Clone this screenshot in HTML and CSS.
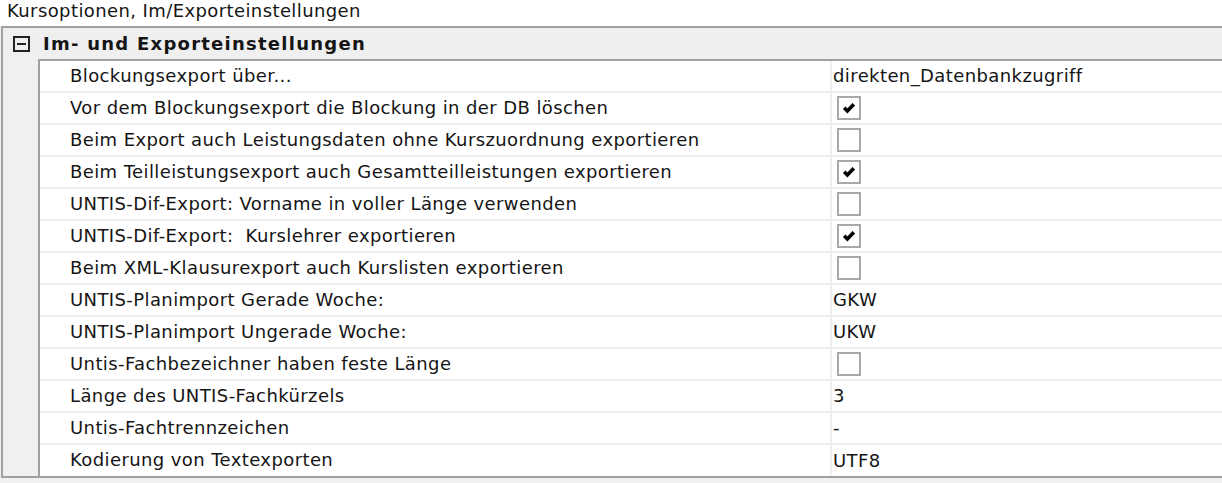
FILE: index.html
```html
<!DOCTYPE html>
<html lang="de">
<head>
    <meta charset="UTF-8">
    <title>Kursoptionen, Im/Exporteinstellungen</title>
    <link rel="stylesheet" href="styles.css">
</head>
<body>
    <div class="caption">Kursoptionen, Im/Exporteinstellungen</div>
    <div class="grid">
        <div class="category">
            <span class="toggle"></span>
            <span class="category-name">Im- und Exporteinstellungen</span>
        </div>
        <div class="body">
            <div class="gutter"></div>
            <div class="rows">
                <div class="row"><div class="name">Blockungsexport über...</div><div class="value">direkten_Datenbankzugriff</div></div>
                <div class="row"><div class="name">Vor dem Blockungsexport die Blockung in der DB löschen</div><div class="value"><span class="check on"><svg viewBox="0 0 14 14"><path d="M2.8 6.8 L5.6 9.6 L11.2 3.8"/></svg></span></div></div>
                <div class="row"><div class="name">Beim Export auch Leistungsdaten ohne Kurszuordnung exportieren</div><div class="value"><span class="check"></span></div></div>
                <div class="row"><div class="name">Beim Teilleistungsexport auch Gesamtteilleistungen exportieren</div><div class="value"><span class="check on"><svg viewBox="0 0 14 14"><path d="M2.8 6.8 L5.6 9.6 L11.2 3.8"/></svg></span></div></div>
                <div class="row"><div class="name">UNTIS-Dif-Export: Vorname in voller Länge verwenden</div><div class="value"><span class="check"></span></div></div>
                <div class="row"><div class="name">UNTIS-Dif-Export:&nbsp; Kurslehrer exportieren</div><div class="value"><span class="check on"><svg viewBox="0 0 14 14"><path d="M2.8 6.8 L5.6 9.6 L11.2 3.8"/></svg></span></div></div>
                <div class="row"><div class="name">Beim XML-Klausurexport auch Kurslisten exportieren</div><div class="value"><span class="check"></span></div></div>
                <div class="row"><div class="name">UNTIS-Planimport Gerade Woche:</div><div class="value">GKW</div></div>
                <div class="row"><div class="name">UNTIS-Planimport Ungerade Woche:</div><div class="value">UKW</div></div>
                <div class="row"><div class="name">Untis-Fachbezeichner haben feste Länge</div><div class="value"><span class="check"></span></div></div>
                <div class="row"><div class="name">Länge des UNTIS-Fachkürzels</div><div class="value">3</div></div>
                <div class="row"><div class="name">Untis-Fachtrennzeichen</div><div class="value">-</div></div>
                <div class="row last"><div class="name">Kodierung von Textexporten</div><div class="value">UTF8</div></div>
            </div>
        </div>
    </div>
</body>
</html>
```
FILE: styles.css
```css
body {
    margin: 0;
    background-color: #f0f0f0;
    font-family: "DejaVu Sans", Verdana, sans-serif;
    font-size: 18px;
    letter-spacing: 0.4px;
    color: #151515;
}

.caption {
    background-color: #fff;
    height: 26px;
    line-height: 21px;
    padding-left: 7px;
}

.grid {
    margin-left: 1px;
    border-top: 2px solid #a0a0a0;
    border-left: 2px solid #a0a0a0;
    border-bottom: 2px solid #a0a0a0;
    background-color: #f0f0f0;
}

.category {
    height: 31px;
    display: flex;
    align-items: center;
    background-color: #efefef;
}

.toggle {
    position: relative;
    box-sizing: border-box;
    width: 17px;
    height: 16px;
    margin-left: 10px;
    border: 2px solid #222;
}

.toggle::after {
    content: "";
    position: absolute;
    left: 2px;
    right: 2px;
    top: 5px;
    height: 2px;
    background-color: #222;
}

.category-name {
    margin-left: 13px;
    font-weight: bold;
    font-size: 18px;
    letter-spacing: 1.25px;
}

.body {
    display: flex;
}

.gutter {
    width: 35px;
    flex-shrink: 0;
}

.rows {
    flex: 1;
    border-top: 2px solid #a0a0a0;
    border-left: 2px solid #a0a0a0;
    background-color: #fff;
}

.row {
    display: flex;
    height: 30px;
    border-bottom: 2px solid #ededed;
}

.row.last {
    border-bottom: none;
    height: 31px;
}

.name {
    width: 760px;
    padding-left: 30px;
    line-height: 30px;
    white-space: nowrap;
}

.value {
    flex: 1;
    border-left: 2px solid #f0f0f0;
    padding-left: 1px;
    line-height: 30px;
    display: flex;
    align-items: center;
}

.check {
    box-sizing: border-box;
    width: 24px;
    height: 24px;
    margin-left: 4px;
    border: 2px solid #a8a8a8;
    background-color: #fff;
    display: flex;
    align-items: center;
    justify-content: center;
}

.check svg {
    width: 16px;
    height: 16px;
    fill: none;
    stroke: #000;
    stroke-width: 3.2;
}
```
